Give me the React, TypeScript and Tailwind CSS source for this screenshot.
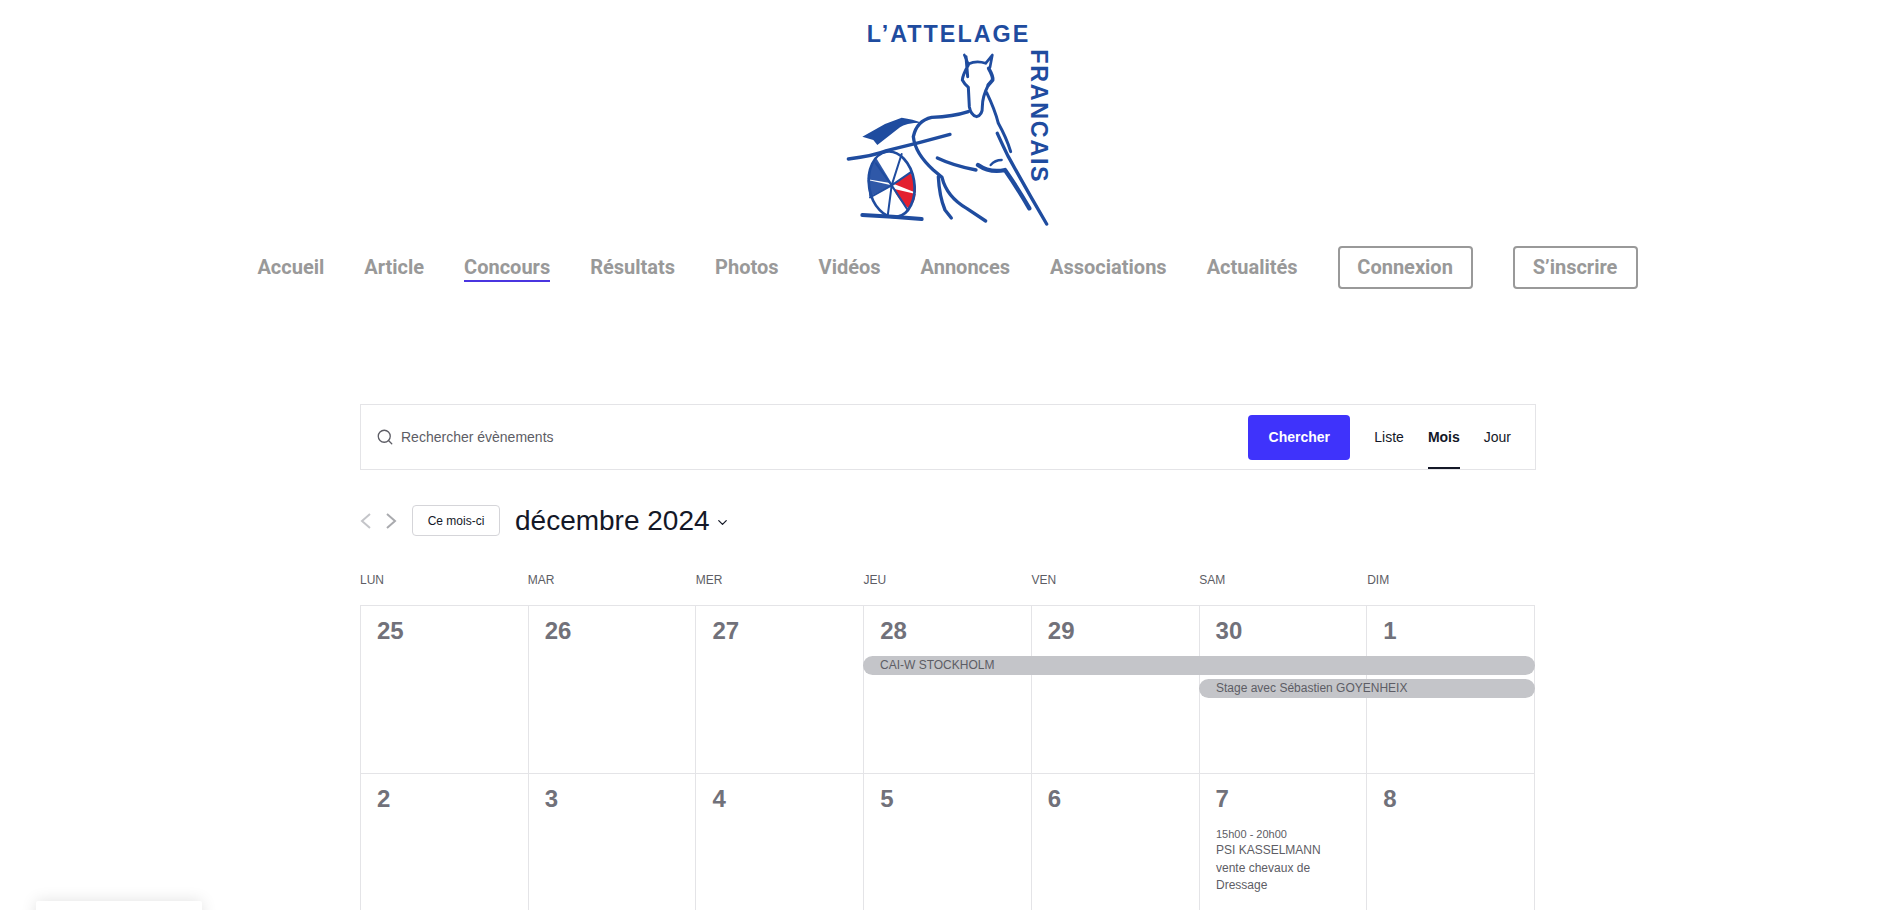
import { ChevronDown, Search } from "lucide-react";

const navLinks = ["Accueil", "Article", "Concours", "Résultats", "Photos", "Vidéos", "Annonces", "Associations", "Actualités"];
const weekdays = ["LUN", "MAR", "MER", "JEU", "VEN", "SAM", "DIM"];
const weeks = [
  [25, 26, 27, 28, 29, 30, 1],
  [2, 3, 4, 5, 6, 7, 8],
];

function Logo() {
  const blue = "#1f4c9f";
  return (
    <svg viewBox="0 0 780 720" className="h-[240px] w-[260px]" fill="none" stroke={blue} strokeLinecap="round" strokeLinejoin="round">
      <text x="140" y="126" textLength="485" lengthAdjust="spacing" fontFamily="Liberation Sans" fontWeight="700" fontSize="70" fill={blue} stroke="none">
        L’ATTELAGE
      </text>
      <text transform="translate(632 148) rotate(90)" textLength="397" lengthAdjust="spacing" fontFamily="Liberation Sans" fontWeight="700" fontSize="70" fill={blue} stroke="none">
        FRANCAIS
      </text>
      {/* wheel */}
      <path d="M215 550 L170 476 Q145 495 143 538 Z" fill="#2f58a8" stroke="none" />
      <path d="M143 540 L215 556 L148 590 Z" fill="#2f58a8" stroke="none" />
      <path d="M222 552 L272 518 Q290 550 288 578 Z" fill="#e3202f" stroke="none" />
      <path d="M220 566 L287 582 Q285 610 265 625 Q235 600 220 566 Z" fill="#e3202f" stroke="none" />
      <ellipse cx="215" cy="553" rx="68" ry="99" transform="rotate(-9 215 553)" strokeWidth="8" />
      <path d="M215 556 L168 490 M215 556 L245 462 M215 556 L275 515 M215 556 L203 648 M215 556 L150 592 M215 556 L262 628" strokeWidth="6" />
      {/* ground + shaft */}
      <path d="M127 645 Q220 650 305 657" strokeWidth="12" />
      <path d="M85 477 Q160 468 200 452 Q300 428 390 403" strokeWidth="10" />
      <path d="M127 410 L195 372 L245 353 Q280 358 305 368 Q255 368 240 382 L172 435 L160 420 Z" fill={blue} stroke="none" />
      {/* horse */}
      <path d="M445 335 Q400 350 335 352 Q290 362 280 410 Q285 460 340 510 L366 532 Q380 590 440 625 L497 663" strokeWidth="10" />
      <path d="M355 530 Q358 590 375 630 L394 654" strokeWidth="10" />
      <path d="M352 474 Q400 497 468 510" strokeWidth="10" />
      <path d="M474 495 Q510 520 555 510 Q590 560 628 625" strokeWidth="13" />
      <path d="M512 495 Q525 480 545 480" strokeWidth="7" />
      <path d="M500 278 Q525 330 535 370 Q560 415 572 455" strokeWidth="9" />
      <path d="M532 400 Q550 440 565 470 Q620 570 680 672" strokeWidth="10" />
      <path d="M433 165 L445 192 Q470 180 497 190 L517 165 L510 202" strokeWidth="8" />
      <path d="M438 170 L443 230 M445 195 Q428 225 427 240 Q435 255 445 262 L448 320 Q452 345 470 350 Q488 345 487 320 Q487 290 505 255" strokeWidth="9" />
      <path d="M506 205 Q520 230 518 240 L505 255" strokeWidth="11" />
    </svg>
  );
}

function DayCell({ day }: { day: number }) {
  return (
    <div className="h-[168px] border-l border-b border-[#e4e4e7] pl-[16px] pt-[12px]">
      <span className="text-[24px] font-bold leading-[26px] text-[#71717a]">{day}</span>
    </div>
  );
}

export default function App() {
  return (
    <div className="relative h-screen overflow-hidden bg-white font-['Liberation_Sans',Arial,sans-serif]">
      <header>
        <div className="flex h-[246px] justify-center pl-[8px]">
          <Logo />
        </div>
        <nav className="flex h-[43px] items-center justify-center gap-[40px] pl-[3px] font-['Roboto',sans-serif] text-[20px] font-bold text-[#999999]">
          {navLinks.map((link) => (
            <a key={link} className={link === "Concours" ? "border-b-2 border-[#4a35e0] leading-[26px]" : "mb-[2px] leading-[26px]"}>
              {link}
            </a>
          ))}
          <a className="flex h-[43px] w-[135px] items-center justify-center rounded-[4px] border-2 border-[#999999] pb-[2px]">Connexion</a>
          <a className="flex h-[43px] w-[125px] items-center justify-center rounded-[4px] border-2 border-[#999999] pb-[2px]">S’inscrire</a>
        </nav>
      </header>

      <main className="ml-[360px] mt-[115px] w-[1175px]">
        <div className="flex h-[66px] w-[1176px] items-center border border-[#e4e4e7] pl-[15px] pr-[24px]">
          <Search className="h-[18px] w-[18px] text-[#5d5d65]" strokeWidth={1.75} />
          <span className="ml-[7px] flex-1 text-[14px] text-[#5d5d65]">Rechercher évènements</span>
          <button type="button" className="h-[45px] w-[102px] rounded-[4px] bg-[#3f33fb] text-[14px] font-bold text-white">
            Chercher
          </button>
          <div className="ml-[24px] flex h-full items-center gap-[24px] text-[14px] text-[#141827]">
            <span>Liste</span>
            <span className="relative flex h-full items-center font-bold">
              Mois
              <span className="absolute bottom-0 left-0 right-0 h-[2px] bg-[#141827]" />
            </span>
            <span>Jour</span>
          </div>
        </div>

        <div className="mt-[35px] flex h-[31px] items-center">
          <svg viewBox="0 0 11 16" className="h-[16px] w-[11px]" fill="none" stroke="#c4c5c9" strokeWidth="2">
            <path d="M10 1 L2 8 L10 15" />
          </svg>
          <svg viewBox="0 0 11 16" className="ml-[15px] h-[16px] w-[11px]" fill="none" stroke="#a9aaae" strokeWidth="2">
            <path d="M1 1 L9 8 L1 15" />
          </svg>
          <button type="button" className="ml-[15px] h-[31px] w-[88px] rounded-[4px] border border-[#d5d5d9] text-[12px] text-[#141827]">
            Ce mois-ci
          </button>
          <span className="ml-[15px] text-[28px] text-[#141827]">décembre 2024</span>
          <ChevronDown className="ml-[5px] mt-[3px] h-[15px] w-[15px] text-[#141827]" />
        </div>

        <div className="mt-[37px] grid h-[32px] grid-cols-7 text-[12px] leading-[14px] text-[#5d5d65]">
          {weekdays.map((day) => (
            <span key={day}>{day}</span>
          ))}
        </div>

        <div className="relative border-r border-t border-[#e4e4e7]">
          {weeks.map((week) => (
            <div key={week[0]} className="grid grid-cols-7">
              {week.map((day) => (
                <DayCell key={day} day={day} />
              ))}
            </div>
          ))}

          <div className="absolute left-[503px] top-[50px] h-[19px] w-[672px] rounded-full bg-[#c4c5c9] pl-[17px] text-[12px] leading-[18px] text-[#5d5d65]">
            CAI-W STOCKHOLM
          </div>
          <div className="absolute left-[839px] top-[73px] h-[19px] w-[336px] rounded-full bg-[#c4c5c9] pl-[17px] text-[12px] leading-[18px] text-[#5d5d65]">
            Stage avec Sébastien GOYENHEIX
          </div>

          <div className="absolute left-[856px] top-[220px] w-[125px] text-[12px] leading-[17.5px] text-[#5d5d65]">
            <p className="text-[11px] leading-[16px]">15h00 - 20h00</p>
            <p>PSI KASSELMANN vente chevaux de Dressage</p>
          </div>
        </div>
      </main>

      <div className="fixed left-[36px] top-[901px] h-[100px] w-[166px] rounded-[2px] bg-white shadow-[0_0_16px_rgba(0,0,0,0.12)]" />
    </div>
  );
}
